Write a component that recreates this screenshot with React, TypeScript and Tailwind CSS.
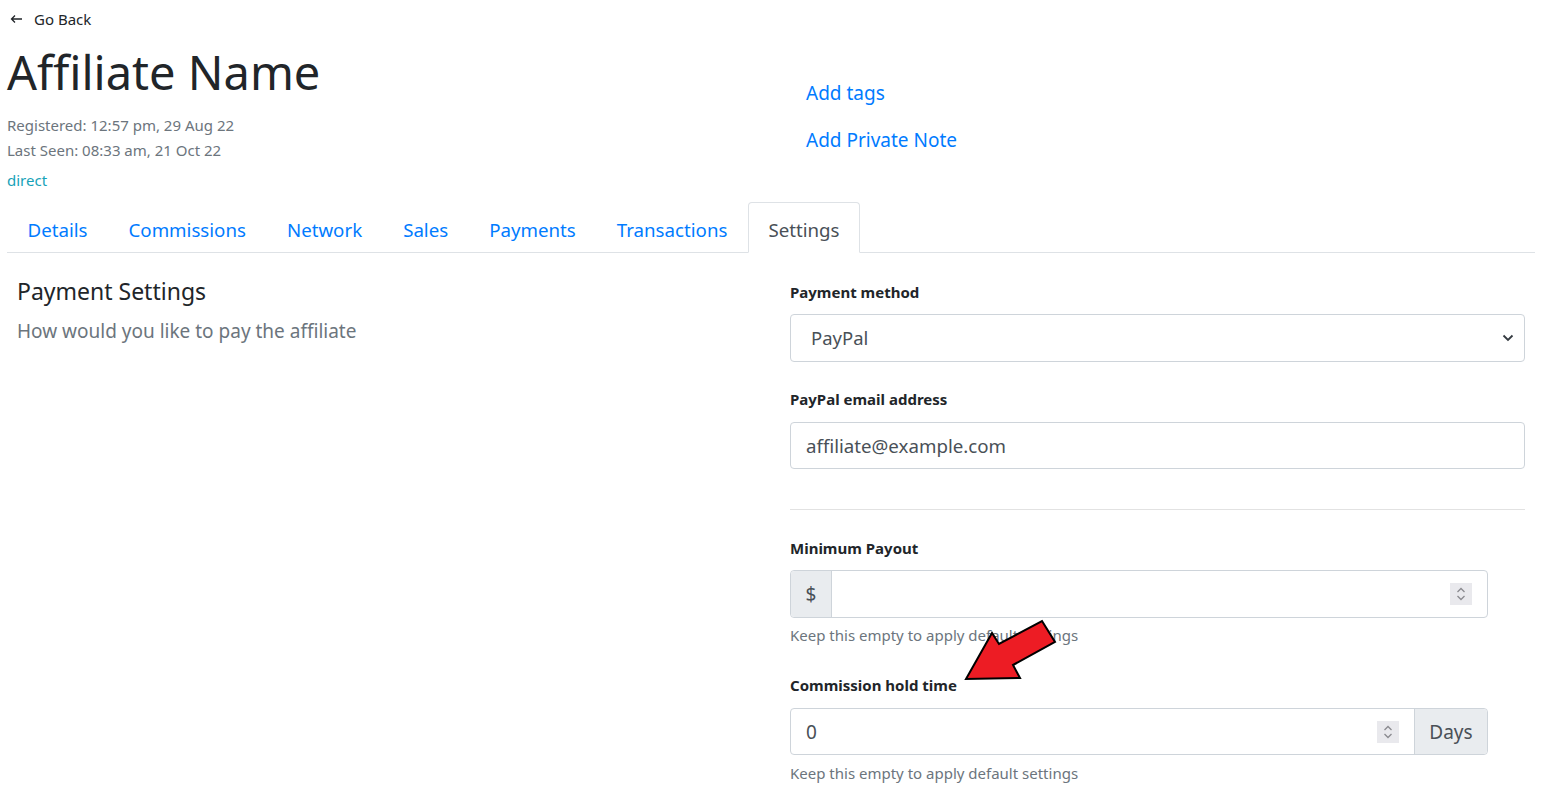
import React from 'react';

const tabs = ['Details', 'Commissions', 'Network', 'Sales', 'Payments', 'Transactions'];

function Spinner() {
  return (
    <div className="flex h-[22px] w-[22px] flex-col items-center justify-center bg-[#e9e9ed]">
      <svg width="10" height="18" viewBox="0 0 10 18" fill="none" stroke="#8a8a8f" strokeWidth="1.3">
        <path d="M1.5 7 L5 3.5 L8.5 7" />
        <path d="M1.5 11 L5 14.5 L8.5 11" />
      </svg>
    </div>
  );
}

function Label({ children, className = '' }: { children: React.ReactNode; className?: string }) {
  return <div className={`h-[22px] text-[15px] font-bold leading-[22px] text-[#212529] ${className}`}>{children}</div>;
}

function Help({ children, className = '' }: { children: React.ReactNode; className?: string }) {
  return <div className={`h-[22px] text-[15px] leading-[22px] text-[#6c757d] ${className}`}>{children}</div>;
}

export default function App() {
  return (
    <div className="relative min-h-[806px] bg-white px-[7px] font-['Noto_Sans',sans-serif] text-[#212529]">
      {/* header */}
      <div className="flex">
        <div className="w-[783px]">
          <a href="#" className="mt-[8px] flex h-[22px] items-center gap-[11px] pl-[3px] text-[15px] text-[#212529]">
            <svg width="13" height="10" viewBox="0 0 13 10" fill="none" stroke="#212529" strokeWidth="1.3">
              <path d="M12 5 H1.5 M5 1.5 L1.5 5 L5 8.5" />
            </svg>
            Go Back
          </a>
          <h1 className="mt-[14px] h-[56px] text-[47px] leading-[56px] font-normal">Affiliate Name</h1>
          <div className="mt-[13px] text-[15px] leading-[25px] text-[#6c757d]">
            <div>Registered: 12:57 pm, 29 Aug 22</div>
            <div>Last Seen: 08:33 am, 21 Oct 22</div>
          </div>
          <a href="#" className="mt-[5px] block h-[24px] text-[15px] leading-[24px] text-[#17a2b8]">direct</a>
        </div>
        <div className="flex-1 pl-[16px] pt-[79px]">
          <a href="#" className="block h-[28px] text-[19px] leading-[28px] text-[#007bff]">Add tags</a>
          <a href="#" className="mt-[19px] block h-[28px] text-[19px] leading-[28px] text-[#007bff]">Add Private Note</a>
        </div>
      </div>

      {/* tabs */}
      <ul className="mt-[10px] flex w-[1528px] border-b border-[#dee2e6]">
        {tabs.map((t) => (
          <li key={t}>
            <a href="#" className="flex h-[50px] items-center px-[20.5px] pt-[6px] text-[18.7px] text-[#007bff]">{t}</a>
          </li>
        ))}
        <li className="-mb-px">
          <a href="#" className="flex h-[51px] items-center rounded-t-[4px] border border-b-white border-[#dee2e6] bg-white px-[19.5px] pt-[6px] text-[18.7px] text-[#495057]">Settings</a>
        </li>
      </ul>

      {/* content */}
      <div className="flex">
        <div className="w-[783px] pl-[10px] pt-[22px]">
          <h2 className="h-[32px] text-[23px] leading-[32px] font-normal">Payment Settings</h2>
          <p className="mt-[10px] h-[28px] text-[19px] leading-[28px] text-[#6c757d]">How would you like to pay the affiliate</p>
        </div>
        <div className="w-[735px] pt-[28px]">
          <Label>Payment method</Label>
          <div className="mt-[11px] flex h-[48px] items-center justify-between rounded-[4px] border border-[#ced4da] pl-[20px] pr-[10px] text-[18.5px] text-[#495057]">
            <span>PayPal</span>
            <svg width="12" height="8" viewBox="0 0 12 8" fill="none" stroke="#343a40" strokeWidth="1.8">
              <path d="M1.5 1.5 L6 6 L10.5 1.5" />
            </svg>
          </div>

          <Label className="mt-[26px]">PayPal email address</Label>
          <div className="mt-[12px] flex h-[47px] items-center rounded-[4px] border border-[#ced4da] pl-[15px] pt-[1px] text-[18.7px] text-[#495057]">
            affiliate@example.com
          </div>

          <div className="mt-[40px] border-t border-[#e2e2e2]" />

          <Label className="mt-[27px]">Minimum Payout</Label>
          <div className="mt-[11px] flex h-[48px] w-[698px] rounded-[4px] border border-[#ced4da]">
            <div className="flex w-[41px] items-center justify-center rounded-l-[4px] border-r border-[#ced4da] bg-[#e9ecef] text-[19px] text-[#495057]">$</div>
            <div className="flex flex-1 items-center justify-end pr-[15px]">
              <Spinner />
            </div>
          </div>
          <Help className="mt-[6px]">Keep this empty to apply default settings</Help>

          <Label className="mt-[28px]">Commission hold time</Label>
          <div className="mt-[12px] flex h-[47px] w-[698px] rounded-[4px] border border-[#ced4da]">
            <div className="flex flex-1 items-center justify-between pl-[15px] pr-[15px] text-[19px] text-[#495057]">
              <span className="pt-[2px]">0</span>
              <Spinner />
            </div>
            <div className="flex w-[73px] items-center justify-center rounded-r-[4px] border-l border-[#ced4da] bg-[#e9ecef] pt-[2px] text-[19px] text-[#495057]">Days</div>
          </div>
          <Help className="mt-[7px]">Keep this empty to apply default settings</Help>
        </div>
      </div>

      {/* annotation arrow */}
      <svg className="pointer-events-none absolute left-0 top-0" width="1542" height="806">
        <polygon
          points="966,679 992,633 999,644 1042,621 1055,642 1013,665 1020,678"
          fill="#ed1c24"
          stroke="#000"
          strokeWidth="2"
          strokeLinejoin="miter"
        />
      </svg>
    </div>
  );
}
